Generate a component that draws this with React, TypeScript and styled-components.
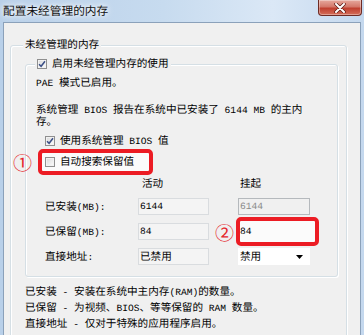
import React from 'react';
import styled, { createGlobalStyle } from 'styled-components';

const cjk = `"Noto Sans CJK SC", "Noto Sans", sans-serif`;
const mono = `"Liberation Mono", "Noto Sans CJK SC", monospace`;

const GlobalStyle = createGlobalStyle`
  html, body {
    margin: 0;
    padding: 0;
  }
  body {
    width: 364px;
    height: 335px;
    overflow: hidden;
    background: #c6daef;
    text-rendering: geometricPrecision;
  }
`;

const Window = styled.div`
  width: 364px;
  height: 335px;
  display: flex;
  flex-direction: column;
  overflow: hidden;
  background: linear-gradient(90deg, #b9d0e9 0%, #c7dbef 45%, #dbe8f6 75%, #c4d8ee 100%);
  font-family: ${cjk};
  font-size: 10.6px;
  color: #000;
`;

const TitleBar = styled.div`
  flex: none;
  height: 22px;
  display: flex;
  justify-content: space-between;
  align-items: flex-start;
  padding: 0 2px 0 3px;
`;

const Title = styled.h1`
  margin: 0;
  font-family: ${cjk};
  font-weight: normal;
  font-size: 11.7px;
  line-height: 21px;
  color: #111;
  text-shadow: 0 0 4px #fff, 0 0 8px #fff;
`;

const CloseButton = styled.button`
  width: 44px;
  height: 16px;
  padding: 0;
  display: flex;
  align-items: center;
  justify-content: center;
  border: 1px solid #6e2b24;
  border-top: none;
  border-radius: 0 0 4px 4px;
  background: linear-gradient(180deg, #e6a99d 0%, #d4786a 45%, #c0402f 55%, #d46e5a 100%);
  box-shadow: inset 0 0 0 1px rgba(255, 255, 255, 0.35);
`;

const Client = styled.div`
  flex: 1;
  margin: 0 3px;
  border: 1px solid #8ba1ba;
  border-bottom: none;
  background: #f0f0f0;
  padding: 14px 13px 0 6px;
`;

const Group = styled.fieldset<{ $pad: string }>`
  margin: 0;
  padding: ${(p) => p.$pad};
  min-inline-size: 0;
  border: 1px solid #d5dfe5;
  border-radius: 3px;
  box-shadow: 1px 1px 0 #fff, inset 1px 1px 0 #fff;
`;

const Legend = styled.legend<{ $shift: number }>`
  display: flex;
  align-items: center;
  gap: 5px;
  height: 16px;
  padding: 0 2px;
  margin-left: ${(p) => p.$shift}px;
  line-height: 16px;
  background: #f0f0f0;
`;

const Box = styled.span`
  flex: none;
  width: 8px;
  height: 8px;
  border: 1px solid #8f8f8f;
  background: linear-gradient(135deg, #d8d8d8, #fdfdfd);
  box-shadow: inset 0 0 0 1px #f2f2f2;
  display: flex;
  align-items: center;
  justify-content: center;
`;

const CheckRow = styled.label`
  display: flex;
  align-items: center;
  gap: 5px;
  height: 14px;
  line-height: 14px;
`;

// half-width latin runs (and their spaces) inside Chinese text
const Mono = styled.span`
  font-family: ${mono};
  font-size: 9.6px;
  line-height: 1;
  white-space: pre;
`;

const Line = styled.p<{ $mt: number; $lh: number }>`
  margin: ${(p) => p.$mt}px 0 0;
  line-height: ${(p) => p.$lh}px;
`;

const Indent = styled.div<{ $mt: number }>`
  margin: ${(p) => p.$mt}px 0 0 9px;
`;

// red annotation frame drawn around a control
const Marked = styled.div<{ $inset: string }>`
  position: relative;
  z-index: 0;
  width: fit-content;
  &::before {
    content: '';
    position: absolute;
    z-index: -1;
    inset: ${(p) => p.$inset};
    border: 4px solid #ec1c24;
    border-radius: 5px;
    background: #fbfbfb;
  }
`;

const Badge = styled.span<{ $gap: number }>`
  position: absolute;
  top: 50%;
  right: calc(100% + ${(p) => p.$gap}px);
  transform: translateY(-50%);
  font-family: ${cjk};
  font-size: 19px;
  line-height: 1;
  color: #e5262b;
`;

const Table = styled.div`
  display: grid;
  grid-template-columns: 93px 100px 72px;
  grid-template-rows: 12px repeat(3, 17px);
  row-gap: 8px;
  align-items: center;
  margin: 9px 0 0 9px;
`;

const Head = styled.span<{ $pad: number }>`
  padding-left: ${(p) => p.$pad}px;
  line-height: 12px;
`;

const RowLabel = styled.span`
  line-height: 17px;
`;

const fieldLook = {
  readonly: 'border: 1px solid #d9dcdf; background: #f4f4f4; color: #000;',
  disabled: 'border: 1px solid #b5b9bd; background: #f0f0f0; color: #8a8a8a;',
  edit: 'border: 1px solid transparent; background: transparent; color: #000;',
  combo: 'border: 1px solid #fff; background: #fff; color: #000;',
};

const Field = styled.div<{ $look: keyof typeof fieldLook; $w: number }>`
  box-sizing: border-box;
  width: ${(p) => p.$w}px;
  height: 17px;
  display: flex;
  align-items: center;
  justify-content: space-between;
  padding: 0 6px 0 1px;
  line-height: 15px;
  ${(p) => fieldLook[p.$look]}
`;

const Notes = styled.div`
  margin-top: 7px;
  line-height: 16px;
`;

const Check: React.FC<{ checked?: boolean }> = ({ checked }) => (
  <Box>
    {checked && (
      <svg width="8" height="8" viewBox="0 0 8 8">
        <path d="M1 4.2 L3.1 6.3 L7 1.2" fill="none" stroke="#3b4f86" strokeWidth="1.5" />
      </svg>
    )}
  </Box>
);

const App: React.FC = () => (
  <>
    <GlobalStyle />
    <Window>
      <TitleBar>
        <Title>配置未经管理的内存</Title>
        <CloseButton aria-label="关闭">
          <svg width="12" height="10" viewBox="0 0 12 10">
            <path d="M2 1 L10 9 M10 1 L2 9" stroke="#5a1a14" strokeWidth="3.4" strokeLinecap="round" />
            <path d="M2 1 L10 9 M10 1 L2 9" stroke="#fff" strokeWidth="2" strokeLinecap="round" />
          </svg>
        </CloseButton>
      </TitleBar>
      <Client>
        <Group $pad="3px 8px 40px 14px">
          <Legend $shift={-2}>未经管理的内存</Legend>
          <Group $pad="4px 10px 11px 10px">
            <Legend $shift={-1}>
              <Check checked />
              <span>启用未经管理内存的使用</span>
            </Legend>
            <Line $mt={0} $lh={14}>
              <Mono>PAE </Mono>模式已启用。
            </Line>
            <Line $mt={14} $lh={12}>
              系统管理<Mono> BIOS </Mono>报告在系统中已安装了<Mono> 6144 MB </Mono>的主内
              <br />
              存。
            </Line>
            <Indent $mt={6}>
              <CheckRow>
                <Check checked />
                <span>
                  使用系统管理<Mono> BIOS </Mono>值
                </span>
              </CheckRow>
            </Indent>
            <Indent $mt={7}>
              <Marked $inset="-6px -19px -6px -7px">
                <Badge $gap={13}>①</Badge>
                <CheckRow>
                  <Check />
                  <span>自动搜索保留值</span>
                </CheckRow>
              </Marked>
            </Indent>
            <Table>
              <span />
              <Head $pad={4}>活动</Head>
              <Head $pad={2}>挂起</Head>

              <RowLabel>
                已安装<Mono>(MB):</Mono>
              </RowLabel>
              <Field $look="readonly" $w={71}>
                <Mono>6144</Mono>
              </Field>
              <Field $look="disabled" $w={72}>
                <Mono>6144</Mono>
              </Field>

              <RowLabel>
                已保留<Mono>(MB):</Mono>
              </RowLabel>
              <Field $look="readonly" $w={71}>
                <Mono>84</Mono>
              </Field>
              <Marked $inset="-6px -9px -6px -2px">
                <Badge $gap={4}>②</Badge>
                <Field $look="edit" $w={72}>
                  <Mono>84</Mono>
                </Field>
              </Marked>

              <RowLabel>
                直接地址<Mono>:</Mono>
              </RowLabel>
              <Field $look="readonly" $w={71}>
                已禁用
              </Field>
              <Field $look="combo" $w={72}>
                <span>禁用</span>
                <svg width="7" height="4" viewBox="0 0 7 4">
                  <path d="M0 0 H7 L3.5 4 Z" fill="#000" />
                </svg>
              </Field>
            </Table>
          </Group>
          <Notes>
            <div>
              已安装<Mono> - </Mono>安装在系统中主内存<Mono>(RAM)</Mono>的数量。
            </div>
            <div>
              已保留<Mono> - </Mono>为视频、<Mono>BIOS</Mono>、等等保留的<Mono> RAM </Mono>数量。
            </div>
            <div>
              直接地址<Mono> - </Mono>仅对于特殊的应用程序启用。
            </div>
          </Notes>
        </Group>
      </Client>
    </Window>
  </>
);

export default App;
